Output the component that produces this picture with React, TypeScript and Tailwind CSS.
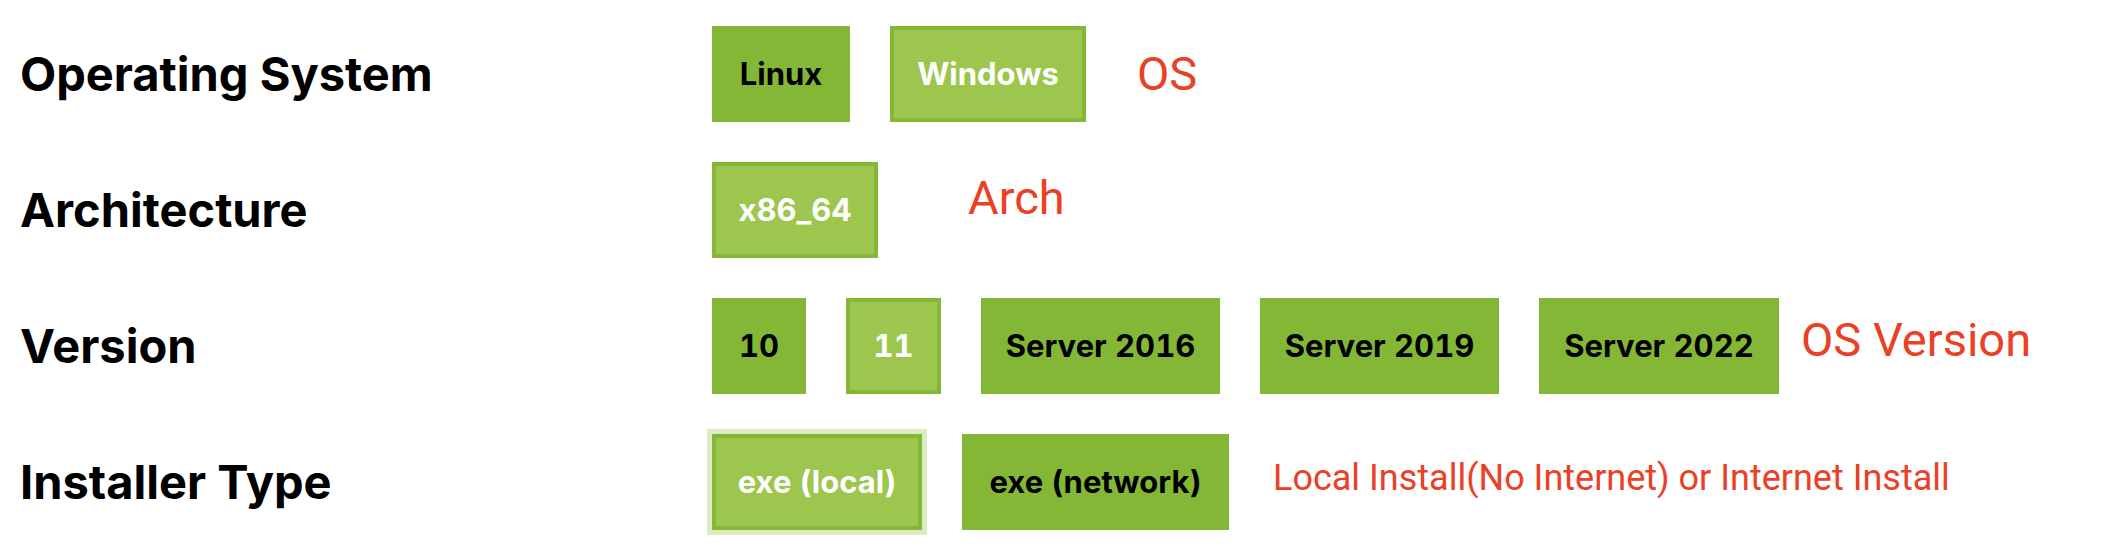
import { useState } from "react";
import clsx from "clsx";

type Option = { label: string; width: string };
type Row = {
  id: string;
  title: string;
  options: Option[];
  initial: string;
  note: string;
  noteClass: string;
};

const rows: Row[] = [
  {
    id: "os",
    title: "Operating System",
    options: [
      { label: "Linux", width: "min-w-[138px]" },
      { label: "Windows", width: "min-w-[196px]" },
    ],
    initial: "Windows",
    note: "OS",
    noteClass: "pl-[51px] text-[47px]",
  },
  {
    id: "arch",
    title: "Architecture",
    options: [{ label: "x86_64", width: "min-w-[166px]" }],
    initial: "x86_64",
    note: "Arch",
    noteClass: "pb-6 pl-[90px] text-[47px]",
  },
  {
    id: "version",
    title: "Version",
    options: [
      { label: "10", width: "min-w-[94px]" },
      { label: "11", width: "min-w-[95px]" },
      { label: "Server 2016", width: "min-w-[239px]" },
      { label: "Server 2019", width: "min-w-[239px]" },
      { label: "Server 2022", width: "min-w-[240px]" },
    ],
    initial: "11",
    note: "OS Version",
    noteClass: "pb-3 pl-[22px] text-[47px]",
  },
  {
    id: "installer",
    title: "Installer Type",
    options: [
      { label: "exe (local)", width: "min-w-[210px]" },
      { label: "exe (network)", width: "min-w-[267px]" },
    ],
    initial: "exe (local)",
    note: "Local Install(No Internet) or Internet Install",
    noteClass: "pb-2 pl-11 text-[36px]",
  },
];

function SelectorRow({ row, focused }: { row: Row; focused: boolean }) {
  const [selected, setSelected] = useState(row.initial);
  return (
    <section className="grid grid-cols-[1fr_2fr] items-center gap-x-[3px]">
      <h2 id={row.id} className="font-['Inter',sans-serif] text-[47px] leading-[56px] font-bold text-black">
        {row.title}
      </h2>
      <div className="flex items-center">
        <div role="group" aria-labelledby={row.id} className="flex shrink-0 gap-10">
          {row.options.map(({ label, width }) => {
            const on = label === selected;
            return (
              <button
                key={label}
                type="button"
                aria-pressed={on}
                onClick={() => setSelected(label)}
                className={clsx(
                  "h-24 border-4 border-[#84b735] px-5 text-center font-['Inter',sans-serif] text-[31px] leading-10 font-bold whitespace-nowrap tabular-nums",
                  width,
                  on ? "bg-[#9dc64e] text-white" : "bg-[#84b735] text-black",
                  on && focused && "ring-5 ring-[#dcebc0]",
                )}
              >
                {label}
              </button>
            );
          })}
        </div>
        <p className={clsx("font-['Roboto',sans-serif] leading-[56px] whitespace-nowrap text-[#ea4025]", row.noteClass)}>
          {row.note}
        </p>
      </div>
    </section>
  );
}

export default function App() {
  return (
    <main className="flex min-h-screen flex-col gap-10 bg-white px-5 pt-[26px] pb-5">
      {rows.map((row) => (
        <SelectorRow key={row.id} row={row} focused={row.id === "installer"} />
      ))}
    </main>
  );
}
